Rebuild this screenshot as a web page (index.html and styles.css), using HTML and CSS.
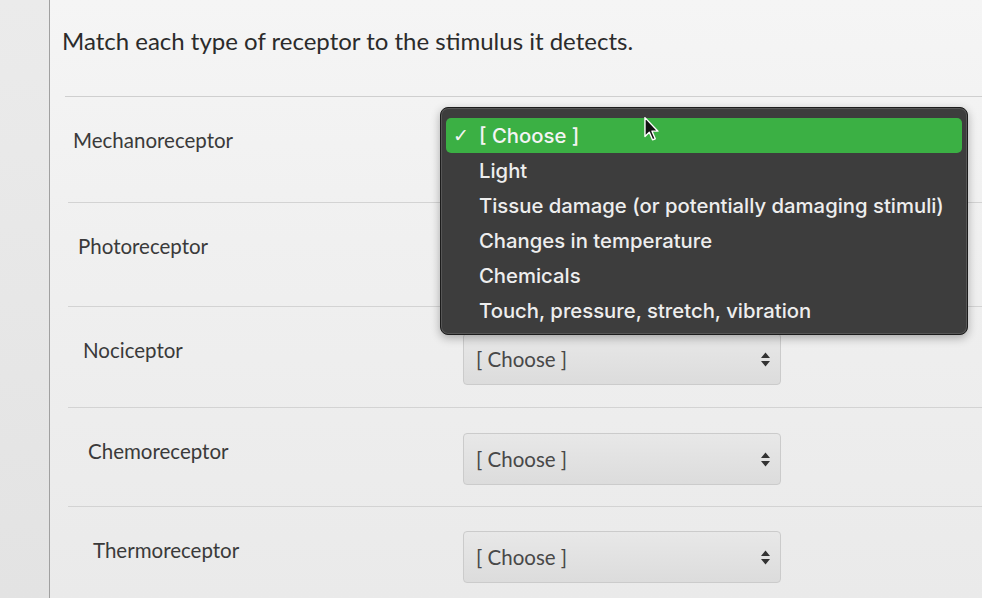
FILE: index.html
```html
<!DOCTYPE html>
<html>
<head>
<meta charset="utf-8">
<link rel="stylesheet" href="styles.css">
</head>
<body>
<div class="page">
  <div class="gutter"></div>
  <main class="content">
    <h1 class="title">Match each type of receptor to the stimulus it detects.</h1>
    <div class="rows">
      <div class="row">
        <div class="label">Mechanoreceptor</div>
        <div class="select covered"><span>[ Choose ]</span><svg class="arrows" width="9" height="15" viewBox="0 0 9 15"><path d="M0 6 L4.5 0.5 L9 6 Z M0 9 L4.5 14.5 L9 9 Z" fill="#333"/></svg></div>
      </div>
      <div class="row">
        <div class="label">Photoreceptor</div>
        <div class="select covered"><span>[ Choose ]</span><svg class="arrows" width="9" height="15" viewBox="0 0 9 15"><path d="M0 6 L4.5 0.5 L9 6 Z M0 9 L4.5 14.5 L9 9 Z" fill="#333"/></svg></div>
      </div>
      <div class="row">
        <div class="label">Nociceptor</div>
        <div class="select"><span>[ Choose ]</span><svg class="arrows" width="9" height="15" viewBox="0 0 9 15"><path d="M0 6 L4.5 0.5 L9 6 Z M0 9 L4.5 14.5 L9 9 Z" fill="#333"/></svg></div>
      </div>
      <div class="row">
        <div class="label">Chemoreceptor</div>
        <div class="select"><span>[ Choose ]</span><svg class="arrows" width="9" height="15" viewBox="0 0 9 15"><path d="M0 6 L4.5 0.5 L9 6 Z M0 9 L4.5 14.5 L9 9 Z" fill="#333"/></svg></div>
      </div>
      <div class="row">
        <div class="label">Thermoreceptor</div>
        <div class="select"><span>[ Choose ]</span><svg class="arrows" width="9" height="15" viewBox="0 0 9 15"><path d="M0 6 L4.5 0.5 L9 6 Z M0 9 L4.5 14.5 L9 9 Z" fill="#333"/></svg></div>
      </div>
    </div>
  </main>

  <div class="menu">
    <div class="item selected"><span class="check">✓</span>[ Choose ]</div>
    <div class="item">Light</div>
    <div class="item">Tissue damage (or potentially damaging stimuli)</div>
    <div class="item">Changes in temperature</div>
    <div class="item">Chemicals</div>
    <div class="item">Touch, pressure, stretch, vibration</div>
  </div>

  <svg class="cursor" width="18" height="26" viewBox="0 0 16 24">
    <path d="M1.5 1.5 L1.5 19 L5.5 15 L8.5 22 L11 21 L8 14 L13.5 14 Z" fill="#111" stroke="#fff" stroke-width="1.3" stroke-linejoin="round"/>
  </svg>
</div>
</body>
</html>
```

FILE: styles.css
```css
* { box-sizing: border-box; }

html, body {
  margin: 0;
  padding: 0;
  width: 982px;
  height: 598px;
  overflow: hidden;
}

body {
  background: #eeeeee;
  font-family: Lato, "Liberation Sans", sans-serif;
}

.page {
  position: relative;
  display: flex;
  width: 982px;
  height: 598px;
}

.gutter {
  width: 50px;
  flex: 0 0 50px;
  background: linear-gradient(180deg, #ebebeb, #e3e3e3);
  border-right: 1px solid #a0a0a0;
}

.content {
  flex: 1;
  background: linear-gradient(180deg, #f5f5f5 0%, #f0f0f0 40%, #eaeaea 100%);
  padding-left: 12px;
}

.title {
  margin: 0;
  padding-top: 27px;
  height: 96px;
  font-size: 24px;
  line-height: 28px;
  font-weight: 400;
  color: #2b2b2b;
}

.rows {
  margin-left: 3px;
  border-top: 1px solid #cfcfcf;
}

.row {
  display: grid;
  grid-template-columns: 395px 318px;
  height: 103px;
  margin-left: 3px;
  border-bottom: 1px solid #d3d3d3;
}

.row:nth-child(1) { height: 106px; }
.row:nth-child(2) { height: 104px; }
.row:nth-child(3) { height: 101px; }
.row:nth-child(4) { height: 99px; }
.row:nth-child(5) { height: 96px; border-bottom: none; }

.label {
  padding-left: 8px;
  padding-top: 31px;
  font-size: 20.5px;
  line-height: 24px;
  color: #3a3a3a;
}

.row:nth-child(1) .label { padding-left: 5px; }
.row:nth-child(2) .label { padding-left: 10px; }
.row:nth-child(3) .label { padding-left: 15px; }
.row:nth-child(4) .label { padding-left: 20px; }
.row:nth-child(5) .label { padding-left: 25px; }

.select {
  margin-top: 26px;
  height: 52px;
  border: 1px solid #cbcbcb;
  border-radius: 4px;
  background: linear-gradient(180deg, #e8e8e8, #dcdcdc);
  display: flex;
  align-items: center;
  justify-content: space-between;
  padding: 0 10px 0 12px;
  font-size: 20.5px;
  color: #484848;
}

.row:nth-child(4) .select { margin-top: 25px; }
.row:nth-child(5) .select { margin-top: 24px; }

.select.covered { visibility: hidden; }

.arrows { display: block; }

.menu {
  position: absolute;
  left: 440px;
  top: 107px;
  width: 528px;
  height: 228px;
  background: #3d3d3d;
  border: 1px solid #1c1c1c;
  border-radius: 8px;
  box-shadow: 0 3px 10px rgba(0,0,0,0.3), inset 0 0 0 1px #565656;
  padding: 10px 5px 7px 5px;
  font-family: Inter, "Liberation Sans", Arial, sans-serif;
}

.item {
  height: 35px;
  line-height: 35px;
  padding-left: 33px;
  font-size: 20.3px;
  font-weight: 500;
  color: #eeeeee;
  white-space: nowrap;
  position: relative;
}

.item.selected {
  background: #3bb044;
  border-radius: 5px;
  color: #f4f4f4;
}

.check {
  position: absolute;
  left: 7px;
  top: 0;
  font-family: "DejaVu Sans", sans-serif;
  font-size: 19px;
  font-weight: 700;
}

.cursor {
  position: absolute;
  left: 643px;
  top: 116px;
}
```
